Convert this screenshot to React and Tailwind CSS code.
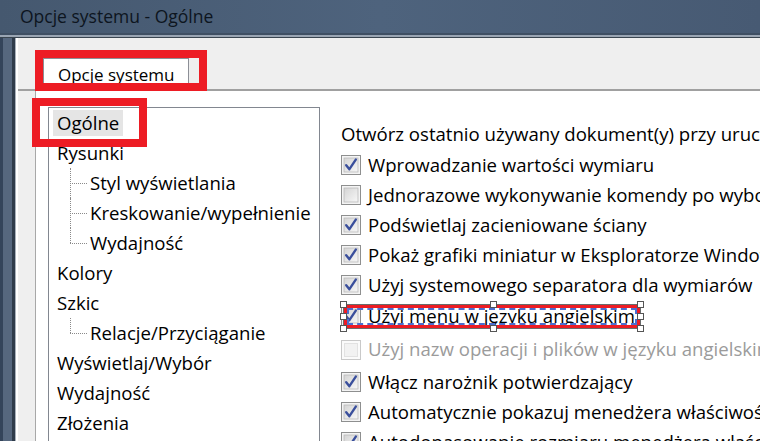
import React from "react";

const FONT = { fontFamily: '"Open Sans", "Noto Sans", "DejaVu Sans", sans-serif' };

function Check({ checked, disabled }) {
  if (disabled) {
    return (
      <svg width="20" height="20" viewBox="0 0 20 20" className="shrink-0">
        <rect x="0.5" y="0.5" width="19" height="19" fill="#fbfbfb" stroke="#c9c9c9" />
        <rect x="3.5" y="3.5" width="13" height="13" fill="#f2f2f2" stroke="#e2e2e2" />
      </svg>
    );
  }
  return (
    <svg width="20" height="20" viewBox="0 0 20 20" className="shrink-0">
      <defs>
        <linearGradient id="cbg" x1="0" y1="0" x2="1" y2="1">
          <stop offset="0" stopColor="#d4d4d4" />
          <stop offset="1" stopColor="#f7f7f7" />
        </linearGradient>
      </defs>
      <rect x="0.5" y="0.5" width="19" height="19" fill="#f4f4f4" stroke="#8e8f8f" />
      <rect x="3" y="3" width="14" height="14" fill="url(#cbg)" stroke="#b9b9b9" strokeWidth="0.8" />
      {checked && (
        <path d="M5.2 10.2 L8.4 14.2 L14.8 4.6" fill="none" stroke="#3a4f9c" strokeWidth="2.4" strokeLinecap="round" strokeLinejoin="round" />
      )}
    </svg>
  );
}

const tree = [
  { t: "Ogólne", sel: true },
  { t: "Rysunki" },
  { t: "Styl wyświetlania", child: true },
  { t: "Kreskowanie/wypełnienie", child: true },
  { t: "Wydajność", child: true, last: true },
  { t: "Kolory" },
  { t: "Szkic" },
  { t: "Relacje/Przyciąganie", child: true, last: true },
  { t: "Wyświetlaj/Wybór" },
  { t: "Wydajność" },
  { t: "Złożenia" },
];

const opts = [
  { t: "Wprowadzanie wartości wymiaru", c: true, h: "h-[30px]" },
  { t: "Jednorazowe wykonywanie komendy po wyborze skrótu", c: false, h: "h-[30px]" },
  { t: "Podświetlaj zacieniowane ściany", c: true, h: "h-[30px]" },
  { t: "Pokaż grafiki miniatur w Eksploratorze Windows", c: true, h: "h-[30px]" },
  { t: "Użyj systemowego separatora dla wymiarów", c: true, h: "h-[30px]" },
  { t: "Użyj menu w języku angielskim", c: true, h: "h-[32px]", sel: true },
  { t: "Użyj nazw operacji i plików w języku angielskim", c: false, h: "h-[35px]", dis: true },
  { t: "Włącz narożnik potwierdzający", c: true, h: "h-[30px]" },
  { t: "Automatycznie pokazuj menedżera właściwości", c: true, h: "h-[30px]" },
  { t: "Autodopasowanie rozmiaru menedżera właściwości", c: true, h: "h-[30px]" },
];

function Handle({ cls }) {
  return <div className={`absolute w-[7px] h-[7px] bg-white border border-[#555] ${cls}`} />;
}

export default function App() {
  return (
    <div className="w-[760px] h-[441px] overflow-hidden relative bg-white flex flex-col" style={FONT}>
      {/* Title bar */}
      <div className="h-[33px] shrink-0 bg-gradient-to-r from-[#45586f] via-[#4e637d] to-[#475a73] flex items-center pl-[20px]">
        <span className="text-[17.5px] text-[#0d1520] leading-none">Opcje systemu - Ogólne</span>
      </div>
      <div className="h-[2px] shrink-0 bg-[#3f4f63]" />
      <div className="h-[2px] shrink-0 bg-[#9aa5b3]" />
      <div className="h-[1px] shrink-0 bg-[#3a4550]" />

      <div className="flex flex-1 min-h-0">
        {/* left window frame */}
        <div className="w-[3px] bg-[#34445a]" />
        <div className="w-[9px] bg-[#56677e]" />
        <div className="w-[3px] bg-[#2f3b4a]" />
        <div className="w-[1px] bg-[#a9b1bb]" />
        <div className="w-[2px] bg-white" />

        {/* content */}
        <div className="flex-1 flex flex-col bg-[#efefef] min-w-0">
          {/* tab strip */}
          <div className="h-[51px] shrink-0 relative flex items-end pl-[25px]">
            <div className="h-[31px] w-[146px] bg-white border-l border-t border-r border-[#8c8f96] flex items-center pl-[14px]">
              <span className="text-[17px] text-black leading-none">Opcje systemu</span>
            </div>
            {/* red annotation */}
            <div className="absolute left-[17px] top-[12px] w-[172px] h-[41px] border-[8px] border-[#ed1c24]" />
          </div>
          <div className="h-[2px] shrink-0 bg-[#a0a0a0]" />

          {/* tab panel */}
          <div className="flex-1 flex min-h-0">
            <div className="w-[17px] shrink-0" />
            <div className="flex-1 bg-white border-l border-[#a8a8a8] flex pl-[12px] pt-[16px] min-w-0 relative">
              {/* tree */}
              <div className="w-[272px] shrink-0 border-l border-t border-r border-[#828790] bg-white relative">
                {tree.map((it, i) =>
                  it.child ? (
                    <div key={i} className="relative h-[30px] shrink-0 flex items-center pl-[41px]">
                      <div className={`absolute left-[21px] top-0 border-l border-dotted border-[#8a8a8a] ${it.last ? "h-[15px]" : "h-full"}`} />
                      <div className="absolute left-[21px] top-[15px] w-[17px] border-t border-dotted border-[#8a8a8a]" />
                      <span className="text-[18.6px] text-black leading-none whitespace-nowrap">{it.t}</span>
                    </div>
                  ) : (
                    <div key={i} className="h-[30px] shrink-0 flex items-center pl-[4px]">
                      <span className={`text-[18.6px] text-black leading-none whitespace-nowrap px-[4px] py-[4px] ${it.sel ? "bg-[#e5e5e5]" : ""}`}>
                        {it.t}
                      </span>
                    </div>
                  )
                )}
              </div>

              {/* options */}
              <div className="flex-1 flex flex-col pl-[21px] pt-[11px] min-w-0">
                <div className="h-[32px] shrink-0 flex items-center">
                  <span className="text-[18.6px] text-black leading-none whitespace-nowrap">
                    Otwórz ostatnio używany dokument(y) przy uruchomieniu
                  </span>
                </div>
                {opts.map((o, i) => (
                  <div key={i} className={`${o.h} relative flex items-center gap-[7px] shrink-0`}>
                    <Check checked={o.c} disabled={o.dis} />
                    <span className={`text-[18.6px] leading-none whitespace-nowrap ${o.dis ? "text-[#9b9b9b]" : "text-black"}`}>{o.t}</span>
                    {o.sel && (
                      <div className="absolute left-[2px] top-[4px] w-[298px] h-[25px] border border-[#6b6b6b]">
                        <div className="absolute inset-0 border-[3px] border-[#ed1c24]">
                          <div className="absolute inset-0 border-2 border-dashed border-[#4a6fd0]" />
                        </div>
                        <Handle cls="-left-[4px] -top-[4px]" />
                        <Handle cls="left-[146px] -top-[4px]" />
                        <Handle cls="-right-[4px] -top-[4px]" />
                        <Handle cls="-left-[4px] top-[8px]" />
                        <Handle cls="-right-[4px] top-[8px]" />
                        <Handle cls="-left-[4px] -bottom-[4px]" />
                        <Handle cls="left-[146px] -bottom-[4px]" />
                        <Handle cls="-right-[4px] -bottom-[4px]" />
                      </div>
                    )}
                  </div>
                ))}
              </div>

              {/* red annotation around Ogólne */}
              <div className="absolute left-[-4px] top-[7px] w-[115px] h-[49px] border-[8px] border-[#ed1c24]" />
            </div>
          </div>
        </div>
      </div>
    </div>
  );
}
